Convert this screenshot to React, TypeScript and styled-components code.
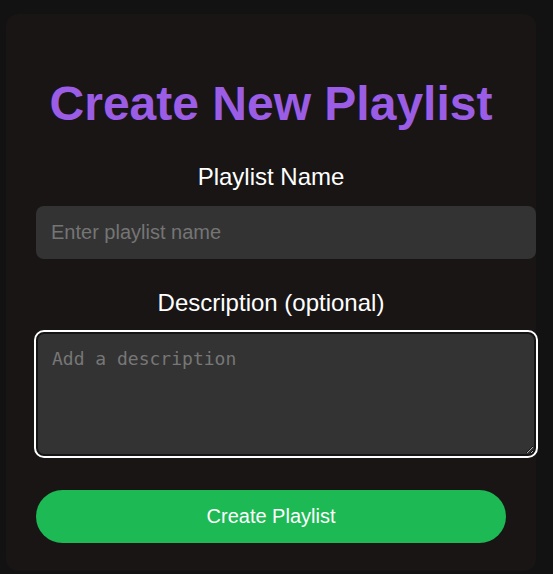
import React from "react";
import styled, { createGlobalStyle } from "styled-components";

const GlobalStyle = createGlobalStyle`
    body {
        margin: 0;
        background-color: #121212;
        font-family: "Liberation Sans", Arial, sans-serif;
    }
`;

export default function App() {
    return (
        <>
            <GlobalStyle />
            <Card>
                <Title>Create New Playlist</Title>
                <FormGroup>
                    <Label htmlFor="playlist-name">Playlist Name</Label>
                    <FieldName id="playlist-name" type="text" placeholder="Enter playlist name" />
                </FormGroup>
                <FormGroup>
                    <Label htmlFor="playlist-description">Description (optional)</Label>
                    <FieldDescription id="playlist-description" placeholder="Add a description" autoFocus />
                </FormGroup>
                <ButtonCreate>Create Playlist</ButtonCreate>
            </Card>
        </>
    );
}

const Card = styled.div`
    display: flex;
    flex-direction: column;
    width: 530px;
    box-sizing: border-box;
    margin: 14px 0 0 6px;
    padding: 30px 30px 28px;
    background-color: #191515;
    border-radius: 12px;
`;

const Title = styled.h1`
    margin: 32px 0;
    font-size: 48px;
    font-weight: 700;
    color: #9b5de5;
    text-align: center;
`;

const FormGroup = styled.div`
    margin-bottom: 30px;
`;

const Label = styled.label`
    display: block;
    margin-bottom: 15px;
    font-size: 24px;
    color: #ffffff;
    text-align: center;
`;

const FieldName = styled.input`
    display: block;
    width: 100%;
    padding: 15px;
    border: none;
    border-radius: 8px;
    background-color: #333333;
    color: #ffffff;
    font-family: "Liberation Sans", Arial, sans-serif;
    font-size: 20px;
    outline: none;

    &::placeholder {
        color: #757575;
    }
`;

const FieldDescription = styled.textarea`
    display: block;
    box-sizing: border-box;
    width: 500px;
    height: 124px;
    padding: 14px;
    border: 2px solid #151515;
    border-radius: 8px;
    background-color: #333333;
    color: #ffffff;
    caret-color: #ffffff;
    font-family: "DejaVu Sans Mono", monospace;
    font-size: 18px;
    outline: 2px solid #ffffff;
    outline-offset: 0;

    &::placeholder {
        color: #777777;
    }
`;

const ButtonCreate = styled.button`
    display: block;
    width: 100%;
    height: 53px;
    margin-top: 4px;
    border: none;
    border-radius: 500px;
    background-color: #1db954;
    color: #ffffff;
    font-family: "Liberation Sans", Arial, sans-serif;
    font-size: 20px;
    cursor: pointer;
`;
